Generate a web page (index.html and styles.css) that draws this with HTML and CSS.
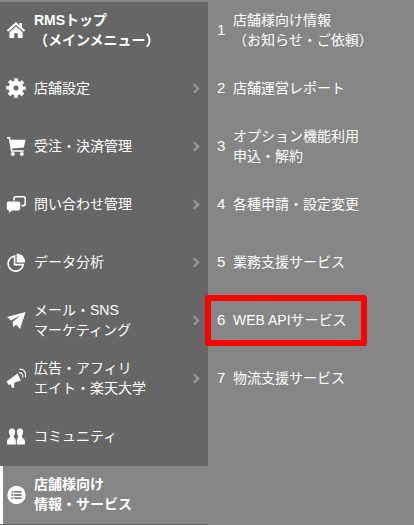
FILE: index.html
```html
<!DOCTYPE html>
<html lang="ja">
<head>
    <meta charset="UTF-8">
    <title>RMS</title>
    <link rel="stylesheet" href="styles.css">
</head>
<body>
    <div class="container">
        <div class="main-menu">
            <div class="menu-item strong">
                <svg class="icon" viewBox="0 0 20 20"><path fill="#fff" d="M10 2 0.8 10.2 2.2 11.8 10 4.9 17.8 11.8 19.2 10.2 16 7.4V3H13.2V4.9ZM10 6.4 3.4 12.2V18H8.2V13.2H11.8V18H16.6V12.2Z"/></svg>
                <span class="label">RMSトップ<br>（メインメニュー）</span>
            </div>
            <div class="menu-item">
                <svg class="icon" viewBox="0 0 20 20"><circle fill="none" stroke="#fff" stroke-width="5" cx="10" cy="10" r="5"/><circle fill="none" stroke="#fff" stroke-width="3.6" stroke-dasharray="3.4 2.88" stroke-dashoffset="1.7" cx="10" cy="10" r="8"/></svg>
                <span class="label">店舗設定</span>
                <span class="chevron"></span>
            </div>
            <div class="menu-item">
                <svg class="icon" viewBox="0 0 20 20"><path fill="#fff" d="M1 1H4L4.6 3.8H19.6L17.8 11.6 6 12.4 6.4 14.2H17.6V15.8H5L2.8 2.6H1Z"/><circle fill="#fff" cx="6.8" cy="18" r="2"/><circle fill="#fff" cx="15.8" cy="18" r="2"/></svg>
                <span class="label">受注・決済管理</span>
                <span class="chevron"></span>
            </div>
            <div class="menu-item">
                <svg class="icon" viewBox="0 0 20 20"><path fill="none" stroke="#fff" stroke-width="1.6" d="M8 6.5V4.6Q8 2.8 9.8 2.8H17.4Q19.2 2.8 19.2 4.6V9.8Q19.2 11.6 17.4 11.6H15.4"/><path fill="#fff" d="M2.6 7.4H12.4Q14.2 7.4 14.2 9.2V14.6Q14.2 16.4 12.4 16.4H6.4L3 19V16.4H2.6Q0.8 16.4 0.8 14.6V9.2Q0.8 7.4 2.6 7.4Z"/></svg>
                <span class="label">問い合わせ管理</span>
                <span class="chevron"></span>
            </div>
            <div class="menu-item">
                <svg class="icon" viewBox="0 0 20 20"><path fill="none" stroke="#fff" stroke-width="1.6" d="M8.6 4A7.6 7.6 0 1 0 17.2 12.6H8.6Z"/><path fill="#fff" d="M10.6 1.4A8.4 8.4 0 0 1 19 10.4H10.6Z"/></svg>
                <span class="label">データ分析</span>
                <span class="chevron"></span>
            </div>
            <div class="menu-item">
                <svg class="icon" viewBox="0 0 20 20"><path fill="#fff" d="M1 7 19.6 2 14 19 10 14.5 7.5 17.5 6.5 12 15 5 5 10.5Z"/></svg>
                <span class="label">メール・SNS<br>マーケティング</span>
                <span class="chevron"></span>
            </div>
            <div class="menu-item">
                <svg class="icon" viewBox="0 0 20 20"><path fill="#fff" d="M0.7 13.4 11.6 5.6 15 12.6 8.4 14.6 8 20 5.6 19.6 5 16.4 2.3 16.8Z"/><path fill="none" stroke="#fff" stroke-width="1.1" d="M13 5Q15 4.4 16.2 6 17.2 7.4 16.6 9.6"/><path fill="none" stroke="#fff" stroke-width="1.1" d="M13.4 1.2Q17 0.8 18.6 3.4 20 5.6 19.4 9.4"/></svg>
                <span class="label">広告・アフィリ<br>エイト・楽天大学</span>
                <span class="chevron"></span>
            </div>
            <div class="menu-item">
                <svg class="icon" viewBox="0 0 20 20"><path fill="#fff" d="M6 2.4C8.6 2.4 9.4 4.6 9 7 8.7 8.8 7.8 9.6 7.8 10.6 7.8 12 9.8 12.4 9.8 15V18.4H1V15.4C1 12.8 4.2 12 4.2 10.6 4.2 9.6 3.4 8.8 3 7 2.6 4.6 3.4 2.4 6 2.4Z"/><path fill="#fff" d="M14 2.4C16.6 2.4 17.4 4.6 17 7 16.7 8.8 15.8 9.6 15.8 10.6 15.8 12 19 12.8 19 15.4V18.4H10.8V15C10.8 12.4 12.2 12 12.2 10.6 12.2 9.6 11.3 8.8 11 7 10.6 4.6 11.4 2.4 14 2.4Z"/></svg>
                <span class="label">コミュニティ</span>
            </div>
            <div class="menu-item strong active">
                <svg class="icon" viewBox="0 0 20 20"><circle fill="#fff" cx="10.5" cy="11" r="9.2"/><path fill="#808080" d="M5.4 7H7.2V8.8H5.4ZM8.2 7H15.6V8.8H8.2ZM5.4 10.1H7.2V11.9H5.4ZM8.2 10.1H15.6V11.9H8.2ZM5.4 13.2H7.2V15H5.4ZM8.2 13.2H15.6V15H8.2Z"/></svg>
                <span class="label">店舗様向け<br>情報・サービス</span>
            </div>
        </div>

        <div class="sub-menu">
            <div class="sub-item"><span class="num">1</span><span>店舗様向け情報<br>（お知らせ・ご依頼）</span></div>
            <div class="sub-item"><span class="num">2</span><span>店舗運営レポート</span></div>
            <div class="sub-item"><span class="num">3</span><span>オプション機能利用<br>申込・解約</span></div>
            <div class="sub-item"><span class="num">4</span><span>各種申請・設定変更</span></div>
            <div class="sub-item"><span class="num">5</span><span>業務支援サービス</span></div>
            <div class="sub-item"><span class="num">6</span><span>WEB APIサービス</span></div>
            <div class="sub-item"><span class="num">7</span><span>物流支援サービス</span></div>
        </div>

        <div class="highlight"></div>
    </div>
</body>
</html>
```

FILE: styles.css
```css
* {
    margin: 0;
    padding: 0;
    box-sizing: border-box;
    font-family: 'Liberation Sans', 'Noto Sans CJK JP', sans-serif;
}

body {
    background-color: #868686;
    color: #fff;
    font-size: 14px;
    line-height: 20px;
    overflow: hidden;
}

.container {
    position: relative;
    display: flex;
    height: 525px;
    padding-top: 2px;
}

.main-menu {
    width: 208px;
    height: 523px;
    background-color: #666;
}

.menu-item {
    position: relative;
    display: flex;
    align-items: center;
    height: 58px;
    padding: 0 0 2px 6px;
}

.menu-item .icon {
    width: 20px;
    height: 20px;
    margin-right: 8px;
    flex-shrink: 0;
}

.strong {
    font-weight: bold;
}

.active {
    background-color: #868686;
    border-left: 3px solid #fff;
    padding-left: 3px;
}

.chevron {
    position: absolute;
    right: 10px;
    top: 50%;
    width: 7px;
    height: 7px;
    margin-top: -4px;
    border-top: 2px solid #999;
    border-right: 2px solid #999;
    transform: rotate(45deg);
}

.sub-menu {
    flex: 1;
}

.sub-item {
    display: flex;
    align-items: center;
    height: 58px;
    padding: 0 0 2px 9px;
}

.num {
    width: 16px;
    font-size: 15px;
    flex-shrink: 0;
}

.highlight {
    position: absolute;
    left: 205px;
    top: 295px;
    width: 162px;
    height: 51px;
    border: 6px solid #f00;
    border-radius: 3px;
}
```
